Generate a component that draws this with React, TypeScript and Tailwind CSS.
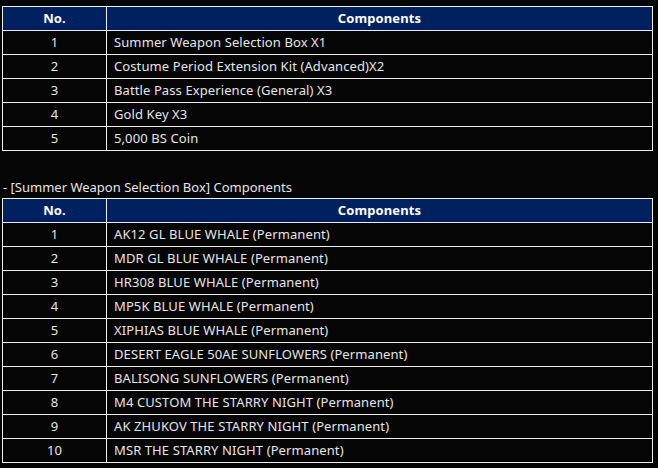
const REWARDS = [
  'Summer Weapon Selection Box X1',
  'Costume Period Extension Kit (Advanced)X2',
  'Battle Pass Experience (General) X3',
  'Gold Key X3',
  '5,000 BS Coin',
];

const WEAPONS = [
  'AK12 GL BLUE WHALE (Permanent)',
  'MDR GL BLUE WHALE (Permanent)',
  'HR308 BLUE WHALE (Permanent)',
  'MP5K BLUE WHALE (Permanent)',
  'XIPHIAS BLUE WHALE (Permanent)',
  'DESERT EAGLE 50AE SUNFLOWERS (Permanent)',
  'BALISONG SUNFLOWERS (Permanent)',
  'M4 CUSTOM THE STARRY NIGHT (Permanent)',
  'AK ZHUKOV THE STARRY NIGHT (Permanent)',
  'MSR THE STARRY NIGHT (Permanent)',
];

function ComponentTable({ items }: { items: string[] }) {
  return (
    <table className="w-[651px] border-collapse text-[13px] tracking-[0.1px]">
      <thead>
        <tr className="h-6 bg-[#002060]">
          <th className="w-[104px] border border-[#f0f0f0] p-0 text-center font-bold text-white">No.</th>
          <th className="border border-[#f0f0f0] p-0 text-center font-bold text-white">Components</th>
        </tr>
      </thead>
      <tbody>
        {items.map((item, i) => (
          <tr key={item} className="h-6">
            <td className="border border-[#f0f0f0] p-0 text-center">{i + 1}</td>
            <td className="border border-[#f0f0f0] py-0 pl-[7px] text-left">{item}</td>
          </tr>
        ))}
      </tbody>
    </table>
  );
}

export default function App() {
  return (
    <div className="h-[468px] w-[658px] overflow-hidden bg-[#050505] pl-[2px] pt-[6px] text-[#e6e6e6] font-['Noto_Sans',sans-serif]">
      <ComponentTable items={REWARDS} />
      <p className="mt-[27px] mb-[2px] pl-px text-[13px] leading-[18px]">- [Summer Weapon Selection Box] Components</p>
      <ComponentTable items={WEAPONS} />
    </div>
  );
}
